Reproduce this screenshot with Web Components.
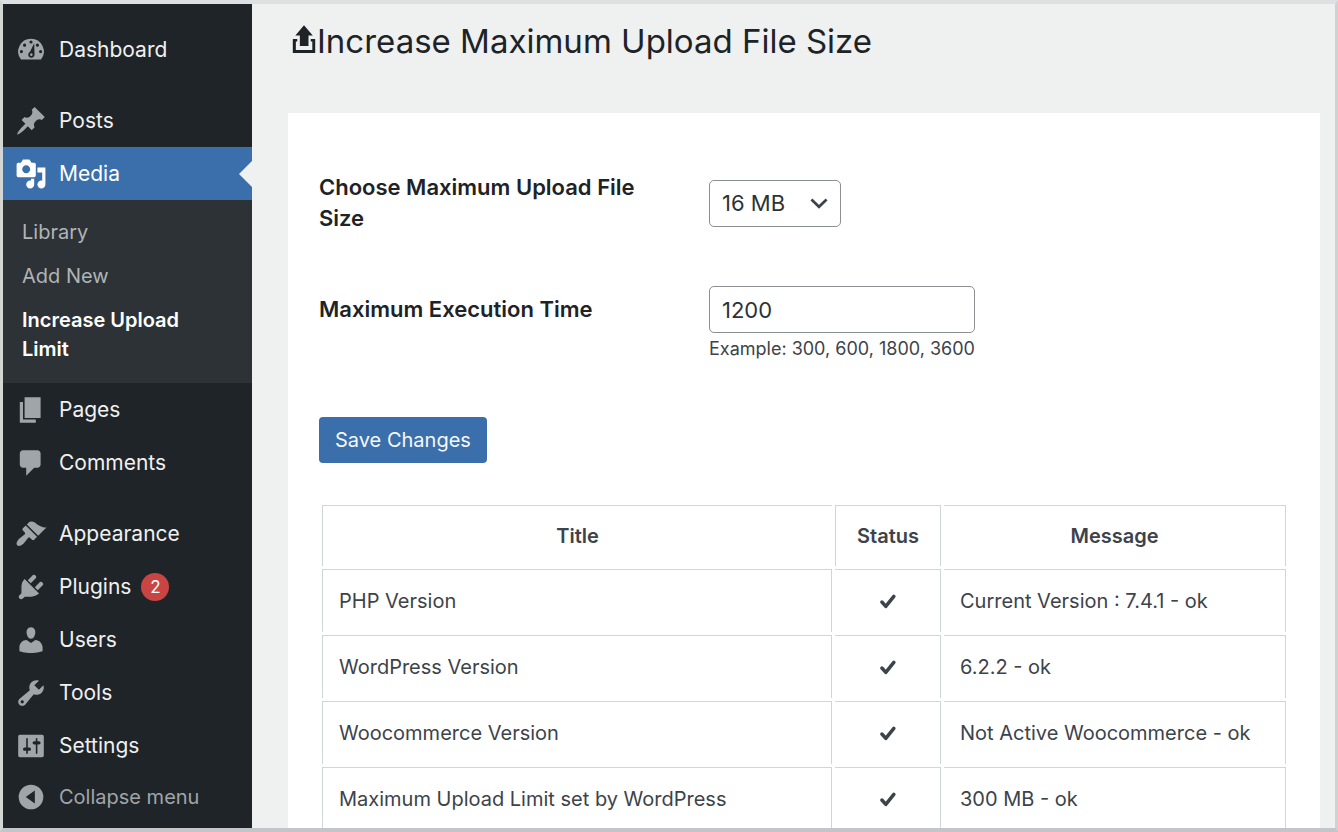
<!DOCTYPE html>
<html lang="en">
<head>
<meta charset="utf-8">
<meta name="viewport" content="width=device-width, initial-scale=1">
<title>Increase Maximum Upload File Size</title>
<style>
  body {
    margin: 0;
    font-family: Inter, "Liberation Sans", sans-serif;
    color: #3c434a;
  }
</style>
</head>
<body>
<admin-app></admin-app>

<script>
const ICONS = {
  dashboard: '<path fill-rule="evenodd" d="M3.760 16h12.480A7.998 7.998 0 0 0 10 3a7.998 7.998 0 0 0-6.240 13zM10 4a1 1 0 1 1 0 2 1 1 0 0 1 0-2zM6 6a1 1 0 1 1 0 2 1 1 0 0 1 0-2zm8 0a1 1 0 1 1 0 2 1 1 0 0 1 0-2zm-2-.2l.2 6.800c.1 1.300-.8 2.200-2 2.200s-2.100-1-1.900-2.200c.1-.7.6-1.100 1.100-1.500zM4 10a1 1 0 1 1 0 2 1 1 0 0 1 0-2zm12 0a1 1 0 1 1 0 2 1 1 0 0 1 0-2z"/><circle cx="10.200" cy="12.900" r=".8"/>',
  post: '<path d="M10.44 3.02l1.82-1.82 6.36 6.35-1.83 1.82c-1.05-.68-2.48-.57-3.41.36l-.75.75c-.92.93-1.04 2.35-.35 3.41l-1.83 1.82-2.41-2.41-2.8 2.79c-.42.42-3.38 2.71-3.8 2.29s1.86-3.39 2.28-3.81l2.79-2.79L4.1 9.36l1.83-1.82c1.05.69 2.48.57 3.4-.36l.75-.75c.93-.92 1.05-2.35.36-3.41z"/>',
  media: '<path fill-rule="evenodd" d="M13 11V4c0-.55-.45-1-1-1h-1.67L9 1H5L3.67 3H2c-.55 0-1 .45-1 1v7c0 .55.45 1 1 1h10c.55 0 1-.45 1-1zM7 4.5c1.38 0 2.5 1.12 2.5 2.5S8.38 9.500 7 9.500 4.500 8.380 4.500 7 5.620 4.500 7 4.500zM14 6h5v10.500c0 1.380-1.120 2.500-2.500 2.500S14 17.880 14 16.500s1.120-2.500 2.500-2.500c.17 0 .34.02.5.05V9h-3V6zm-4 8.050V13h2v3.500c0 1.380-1.120 2.500-2.500 2.500S7 17.880 7 16.500 8.120 14 9.500 14c.17 0 .34.02.5.05z"/>',
  page: '<path d="M6 15V2h10v13H6zm-1 1h8v2H3V5h2v11z"/>',
  comments: '<path d="M5 2h9c1.1 0 2 .9 2 2v7c0 1.1-.9 2-2 2h-2l-5 5v-5H5c-1.100 0-2-.9-2-2V4c0-1.100.9-2 2-2z"/>',
  appearance: '<path d="M14.480 11.060L7.410 3.990l1.500-1.500c.5-.56 2.300-.47 3.510.32 1.210.8 1.430 1.280 2.910 2.100 1.180.64 2.450 1.260 4.450.85zm-.71.71L6.700 4.700 4.930 6.470c-.39.39-.39 1.020 0 1.410l1.060 1.060c.39.39.39 1.030 0 1.420-.6.6-1.430 1.110-2.210 1.690-.35.26-.7.53-1.010.84C1.430 14.230.4 16.080 1.400 17.070c.99 1 2.840-.03 4.180-1.360.31-.31.58-.66.85-1.020.57-.78 1.080-1.610 1.690-2.210.39-.39 1.020-.39 1.410 0l1.060 1.060c.39.39 1.020.39 1.410 0z"/>',
  plugins: '<path d="M13.110 4.360L9.870 7.600 8 5.730l3.240-3.240c.35-.34 1.050-.2 1.560.32.52.51.66 1.210.31 1.550zm-8 1.770l.91-1.120 9.010 9.010-1.190.84c-.71.71-2.630 1.160-3.820 1.160H6.140L4.900 17.260c-.59.59-1.540.59-2.120 0-.59-.58-.59-1.530 0-2.120l1.240-1.240v-3.880c0-1.130.4-3.190 1.090-3.890zm7.260 3.970l3.240-3.240c.34-.35 1.040-.21 1.550.31.52.51.66 1.210.31 1.550l-3.240 3.250z"/>',
  users: '<path d="M10 9.250c-2.270 0-2.730-3.440-2.730-3.440C7 4.020 7.820 2 9.970 2c2.160 0 2.980 2.020 2.710 3.810 0 0-.41 3.440-2.680 3.440zm0 2.570L12.720 10c2.390 0 4.520 2.330 4.520 4.530v2.490s-3.650 1.130-7.240 1.130c-3.650 0-7.240-1.130-7.240-1.130v-2.490c0-2.250 1.940-4.480 4.470-4.480z"/>',
  tools: '<path fill-rule="evenodd" d="M16.680 9.770c-1.340 1.340-3.300 1.670-4.950.99l-5.410 6.520c-.99.99-2.590.99-3.580 0s-.99-2.590 0-3.570l6.520-5.420c-.68-1.650-.35-3.610.99-4.950 1.280-1.280 3.120-1.620 4.720-1.060l-2.890 2.890 2.820 2.820 2.860-2.870c.53 1.580.18 3.390-1.080 4.650zM3.810 16.210c.4.39 1.040.39 1.430 0 .4-.4.4-1.040 0-1.430-.39-.4-1.030-.4-1.430 0-.39.39-.39 1.030 0 1.430z"/>',
  settings: '<path fill-rule="evenodd" d="M18 16V4c0-.55-.45-1-1-1H3c-.55 0-1 .45-1 1v12c0 .55.45 1 1 1h14c.55 0 1-.45 1-1zM8 11h1c.55 0 1 .45 1 1s-.45 1-1 1H8v1.500c0 .28-.22.5-.5.5s-.5-.22-.5-.5V13H6c-.55 0-1-.45-1-1s.45-1 1-1h1V5.500c0-.28.22-.5.5-.5s.5.22.5.5V11zm5-2h-1c-.55 0-1-.45-1-1s.45-1 1-1h1V5.500c0-.28.22-.5.5-.5s.5.22.5.5V7h1c.55 0 1 .45 1 1s-.45 1-1 1h-1v5.500c0 .28-.22.5-.5.5s-.5-.22-.5-.5V9z"/>',
  collapse: '<path fill-rule="evenodd" d="M10 2.300a7.700 7.700 0 1 1 0 15.400 7.700 7.700 0 0 1 0-15.400zM12.400 6L6.700 10l5.700 4z"/>',
  upload: '<path d="M7.400 13.200V6.500H4.600L10 .2l5.500 6.300h-2.700v6.700zM3 8.800h2.800v1.500H4.900v5.300h10.300v-5.300h-1V8.800H17v8.700H3z"/>',
  check: '<path d="M5.300 10.800l3 3.300 6.200-7.600" fill="none" stroke="currentColor" stroke-width="2.700" stroke-linecap="round" stroke-linejoin="round"/>',
  chevron: '<path d="M4.600 7.500l5.400 5.200 5.400-5.200" fill="none" stroke="currentColor" stroke-width="1.900"/>'
};

class DashIcon extends HTMLElement {
  connectedCallback() {
    this.attachShadow({ mode: 'open' });
    this.shadowRoot.innerHTML = `
      <style>
        :host {
          display: inline-block;
          width: 32px;
          height: 32px;
          flex: none;
        }
        svg {
          display: block;
          width: 100%;
          height: 100%;
          fill: currentColor;
        }
      </style>
      <svg viewBox="0 0 20 20" aria-hidden="true">${ICONS[this.getAttribute('name')]}</svg>
    `;
  }
}

class MenuItem extends HTMLElement {
  connectedCallback() {
    this.attachShadow({ mode: 'open' });
    const badge = this.getAttribute('badge');
    this.shadowRoot.innerHTML = `
      <style>
        :host {
          display: block;
          color: #f0f0f1;
          --icon: #a0a5aa;
        }
        :host([spaced]) {
          margin-top: 18px;
        }
        a {
          position: relative;
          display: flex;
          align-items: center;
          gap: 12px;
          height: 53px;
          padding-left: 12px;
          color: inherit;
          font-size: 21px;
          text-decoration: none;
        }
        dash-icon {
          color: var(--icon);
        }
        :host([current]) {
          color: #fff;
          --icon: #fff;
        }
        :host([current]) a {
          background: #3b6fab;
        }
        :host([current]) a::after {
          content: "";
          position: absolute;
          right: 0;
          top: 50%;
          margin-top: -13px;
          border: solid transparent;
          border-width: 13px 13px 13px 0;
          border-right-color: #eff1f1;
        }
        .badge {
          width: 28px;
          line-height: 28px;
          margin-left: -2px;
          border-radius: 50%;
          background: #c94543;
          color: #fff;
          font-size: 17px;
          text-align: center;
        }
      </style>
      <a href="#">
        <dash-icon name="${this.getAttribute('icon')}"></dash-icon>
        <span><slot></slot></span>
        ${badge ? `<span class="badge">${badge}</span>` : ''}
      </a>
    `;
  }
}

class SubMenu extends HTMLElement {
  connectedCallback() {
    this.attachShadow({ mode: 'open' });
    this.shadowRoot.innerHTML = `
      <style>
        :host {
          display: block;
          padding: 11px 0;
          background: #2d3236;
        }
        ::slotted(a) {
          display: block;
          padding: 7px 40px 8px 19px;
          color: #b0b4b7;
          font-size: 20px;
          line-height: 29px;
          text-decoration: none;
        }
        ::slotted(a[aria-current]) {
          color: #fff;
          font-weight: 600;
        }
      </style>
      <slot></slot>
    `;
  }
}

class AdminMenu extends HTMLElement {
  connectedCallback() {
    this.attachShadow({ mode: 'open' });
    this.shadowRoot.innerHTML = `
      <style>
        :host {
          display: block;
          background: #1f2428;
        }
        nav {
          padding-top: 19px;
        }
        button {
          display: flex;
          align-items: center;
          gap: 12px;
          width: 100%;
          height: 50px;
          padding: 0 0 0 12px;
          border: 0;
          background: none;
          color: #a0a5aa;
          font: inherit;
          font-size: 20px;
          cursor: pointer;
        }
      </style>
      <nav>
        <menu-item icon="dashboard">Dashboard</menu-item>
        <menu-item icon="post" spaced>Posts</menu-item>
        <menu-item icon="media" current>Media</menu-item>
        <sub-menu>
          <a href="#">Library</a>
          <a href="#">Add New</a>
          <a href="#" aria-current="page">Increase Upload Limit</a>
        </sub-menu>
        <menu-item icon="page">Pages</menu-item>
        <menu-item icon="comments">Comments</menu-item>
        <menu-item icon="appearance" spaced>Appearance</menu-item>
        <menu-item icon="plugins" badge="2">Plugins</menu-item>
        <menu-item icon="users">Users</menu-item>
        <menu-item icon="tools">Tools</menu-item>
        <menu-item icon="settings">Settings</menu-item>
        <button type="button"><dash-icon name="collapse"></dash-icon>Collapse menu</button>
      </nav>
    `;
  }
}

class FormRow extends HTMLElement {
  connectedCallback() {
    this.attachShadow({ mode: 'open' });
    // The label centres on the control; the hint sits in a second row below it
    this.shadowRoot.innerHTML = `
      <style>
        :host {
          display: grid;
          grid-template-columns: 330px 1fr;
          column-gap: 60px;
          align-items: center;
        }
        .label {
          color: #1d2327;
          font-size: 22px;
          font-weight: 600;
          line-height: 31px;
        }
        .hint {
          grid-column: 2;
        }
      </style>
      <div class="label"><slot name="label"></slot></div>
      <div><slot></slot></div>
      <div class="hint"><slot name="hint"></slot></div>
    `;
  }
}

class UploadForm extends HTMLElement {
  connectedCallback() {
    this.attachShadow({ mode: 'open' });
    this.shadowRoot.innerHTML = `
      <style>
        :host {
          display: block;
        }
        form {
          display: grid;
          row-gap: 52px;
        }
        select, input {
          box-sizing: border-box;
          height: 47px;
          padding: 0 12px;
          border: 1px solid #8c8f94;
          border-radius: 5px;
          background: #fff;
          color: #2c3338;
          font: inherit;
          font-size: 22px;
        }
        input {
          display: block;
          width: 266px;
          max-width: 100%;
        }
        .select {
          display: grid;
          align-items: center;
          width: 132px;
        }
        .select > * {
          grid-area: 1 / 1;
        }
        select {
          appearance: none;
        }
        .select dash-icon {
          width: 28px;
          height: 28px;
          margin-right: 8px;
          justify-self: end;
          pointer-events: none;
        }
        small {
          display: block;
          font-size: 18px;
          line-height: 32px;
        }
        button {
          justify-self: start;
          height: 46px;
          padding: 0 16px;
          border: 0;
          border-radius: 4px;
          background: #3b6fab;
          color: #f6f7f7;
          font: inherit;
          font-size: 20px;
        }
      </style>
      <form>
        <form-row>
          <label slot="label" for="size">Choose Maximum Upload File Size</label>
          <div class="select">
            <select id="size">
              <option>16 MB</option>
              <option>32 MB</option>
              <option>64 MB</option>
            </select>
            <dash-icon name="chevron"></dash-icon>
          </div>
        </form-row>
        <form-row>
          <label slot="label" for="time">Maximum Execution Time</label>
          <input id="time" type="text" value="1200" aria-describedby="hint">
          <small slot="hint" id="hint">Example: 300, 600, 1800, 3600</small>
        </form-row>
        <button type="button">Save Changes</button>
      </form>
    `;
  }
}

class StatusTable extends HTMLElement {
  connectedCallback() {
    const rows = [
      ['PHP Version', 'Current Version : 7.4.1 - ok'],
      ['WordPress Version', '6.2.2 - ok'],
      ['Woocommerce Version', 'Not Active Woocommerce - ok'],
      ['Maximum Upload Limit set by WordPress', '300 MB - ok']
    ];

    this.attachShadow({ mode: 'open' });
    this.shadowRoot.innerHTML = `
      <style>
        :host {
          display: block;
        }
        table {
          width: 100%;
          border-spacing: 3px;
          table-layout: fixed;
          font-size: 20px;
        }
        th, td {
          box-sizing: border-box;
          height: 63px;
          padding: 0 16px;
          border: 1px solid #d0d5d5;
          border-bottom: 0;
          text-align: left;
        }
        th {
          height: 61px;
          padding: 0;
          font-weight: 600;
          text-align: center;
        }
        th:first-child {
          width: 510px;
          border-right: 0;
        }
        th:nth-child(2) {
          width: 106px;
        }
        th:last-child, td:last-child, td:nth-child(2) {
          border-left: 0;
        }
        td:nth-child(2) {
          text-align: center;
        }
        td dash-icon {
          width: 26px;
          height: 26px;
          vertical-align: middle;
        }
      </style>
      <table>
        <thead>
          <tr><th>Title</th><th>Status</th><th>Message</th></tr>
        </thead>
        <tbody>
          ${rows.map(([title, message]) => `
            <tr>
              <td>${title}</td>
              <td><dash-icon name="check"></dash-icon></td>
              <td>${message}</td>
            </tr>
          `).join('')}
        </tbody>
      </table>
    `;
  }
}

class AdminApp extends HTMLElement {
  connectedCallback() {
    this.attachShadow({ mode: 'open' });
    this.shadowRoot.innerHTML = `
      <style>
        :host {
          display: grid;
          grid-template-columns: 249px 1fr;
          box-sizing: border-box;
          height: 100vh;
          border: solid;
          border-width: 4px 3px;
          border-color: #dfe0e1 #cfd2d1 #c4c5c9 #d3d6d3;
        }
        admin-menu, main {
          min-height: 0;
          overflow: hidden;
        }
        main {
          display: flex;
          flex-direction: column;
          padding: 0 15px 0 36px;
          background: #eff1f1;
        }
        h1 {
          display: flex;
          align-items: center;
          margin: 0;
          padding: 14px 0 49px;
          color: #1d2327;
          font-size: 33px;
          font-weight: 400;
          line-height: 46px;
        }
        h1 dash-icon {
          margin-right: -3px;
        }
        section {
          flex: 1 0 auto;
          padding: 59px 31px 0;
          background: #fff;
        }
        status-table {
          margin-top: 39px;
        }
      </style>
      <admin-menu></admin-menu>
      <main>
        <h1><dash-icon name="upload"></dash-icon>Increase Maximum Upload File Size</h1>
        <section>
          <upload-form></upload-form>
          <status-table></status-table>
        </section>
      </main>
    `;
  }
}

customElements.define('dash-icon', DashIcon);
customElements.define('menu-item', MenuItem);
customElements.define('sub-menu', SubMenu);
customElements.define('admin-menu', AdminMenu);
customElements.define('form-row', FormRow);
customElements.define('upload-form', UploadForm);
customElements.define('status-table', StatusTable);
customElements.define('admin-app', AdminApp);
</script>
</body>
</html>
